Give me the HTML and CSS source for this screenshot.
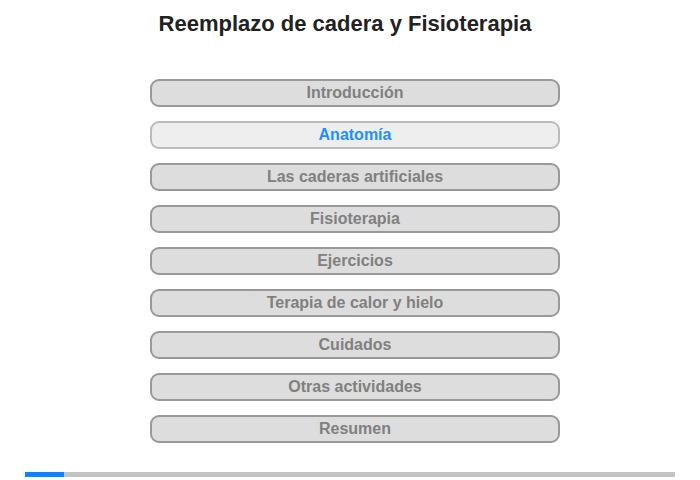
FILE: index.html
```html
<!DOCTYPE html>
<html lang="es">
<head>
<meta charset="utf-8">
<title>Reemplazo de cadera y Fisioterapia</title>
<link rel="stylesheet" href="styles.css">
</head>
<body>
<div class="page">
  <h1 class="title">Reemplazo de cadera y Fisioterapia</h1>
  <nav class="menu">
    <div class="item">Introducción</div>
    <div class="item active">Anatomía</div>
    <div class="item">Las caderas artificiales</div>
    <div class="item">Fisioterapia</div>
    <div class="item">Ejercicios</div>
    <div class="item">Terapia de calor y hielo</div>
    <div class="item">Cuidados</div>
    <div class="item">Otras actividades</div>
    <div class="item">Resumen</div>
  </nav>
  <div class="progress"><div class="progress-fill" style="width:39px"></div></div>
</div>
</body>
</html>
```
FILE: styles.css
```css
html, body {
  margin: 0;
  padding: 0;
  background: #fff;
}
.page {
  width: 700px;
  height: 480px;
  font-family: "Liberation Sans", Arial, sans-serif;
  display: flex;
  flex-direction: column;
  align-items: center;
}
.title {
  margin: 0 10px 0 0;
  padding-top: 11px;
  font-size: 22px;
  line-height: 26px;
  font-weight: bold;
  color: #222;
  text-align: center;
}
.menu {
  margin: 42px 0 0 10px;
  display: flex;
  flex-direction: column;
  gap: 14px;
  width: 410px;
}
.item {
  box-sizing: border-box;
  height: 28px;
  border: 2px solid #999;
  border-radius: 9px;
  background: #ddd;
  color: #808080;
  font-size: 16px;
  font-weight: bold;
  line-height: 23px;
  text-align: center;
}
.item.active {
  background: #eee;
  border-color: #bbb;
  color: #1e90ff;
}
.progress {
  margin-top: 29px;
  width: 650px;
  height: 5px;
  background: #c3c3c3;
  display: flex;
}
.progress-fill {
  height: 100%;
  background: #0a84ff;
}
```
